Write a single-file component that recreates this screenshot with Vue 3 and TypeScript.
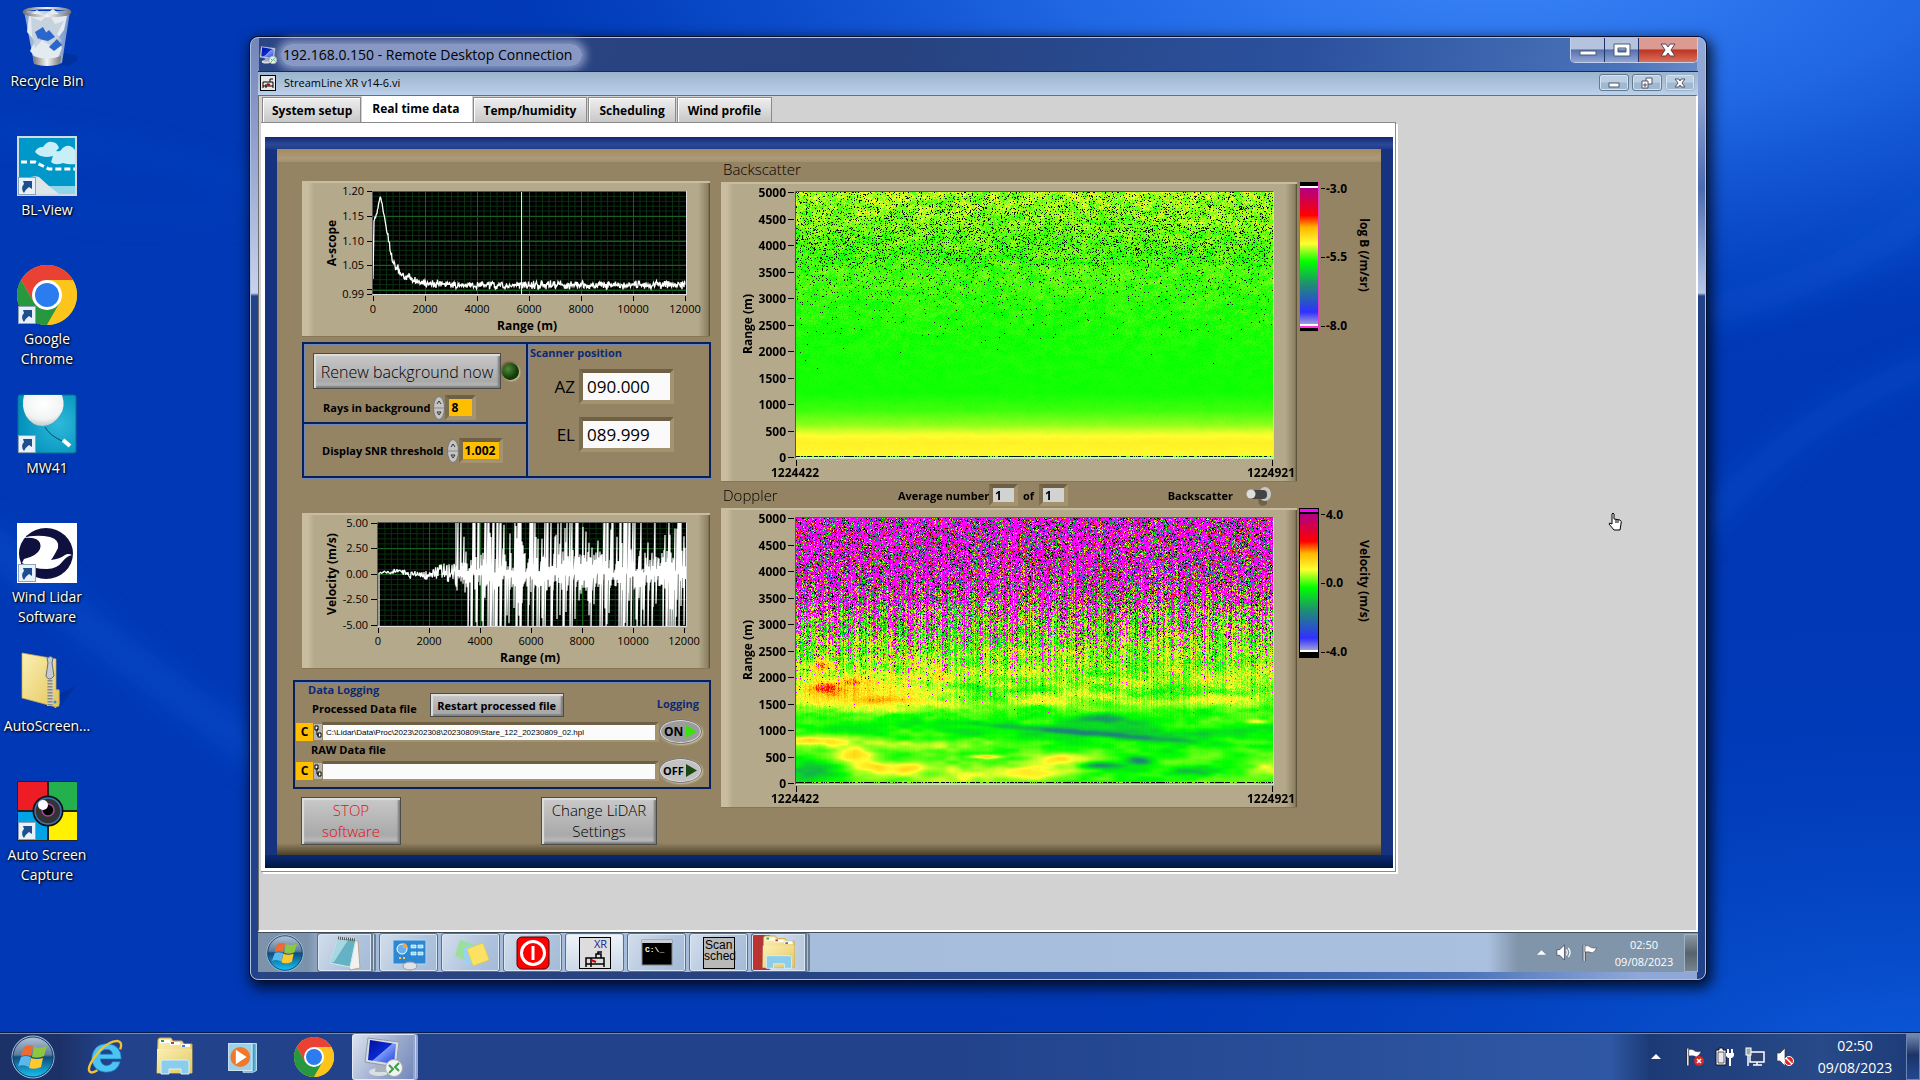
<script setup lang="ts">
import { onMounted, ref } from 'vue'

type Rgb = [number, number, number]
type Blob = [number, number, number, number, number]

const shortcuts = [
  { icon: 'i-bin', label: 'Recycle Bin', link: false },
  { icon: 'i-blview', label: 'BL-View', link: true },
  { icon: 'i-chrome', label: 'Google Chrome', link: true },
  { icon: 'i-mw41', label: 'MW41', link: true },
  { icon: 'i-lidar', label: 'Wind Lidar Software', link: true },
  { icon: 'i-zip', label: 'AutoScreen...', link: false },
  { icon: 'i-asc', label: 'Auto Screen Capture', link: true },
]

const tabs = ['System setup', 'Real time data', 'Temp/humidity', 'Scheduling', 'Wind profile']
const activeTab = ref('Real time data')

const remoteTasks = [
  { icon: 'i-notepad', name: 'Notepad', cls: 'stack' },
  { icon: 'i-control', name: 'Control panel', cls: '' },
  { icon: 'i-notes', name: 'Sticky notes', cls: '' },
  { icon: 'i-power', name: 'Power', cls: '' },
  { icon: 'xr', name: 'StreamLine XR', cls: 'lit' },
  { icon: 'cmd', name: 'Command prompt', cls: '' },
  { icon: 'scan', name: 'Scan scheduler', cls: '' },
  { icon: 'i-explorer', name: 'Explorer', cls: 'stack alert' },
]

const rangeTicks = [5000, 4500, 4000, 3500, 3000, 2500, 2000, 1500, 1000, 500, 0]
const distanceTicks = [0, 2000, 4000, 6000, 8000, 10000, 12000]
const scopeTicks = [
  { y: 10, t: '1.20' },
  { y: 35, t: '1.15' },
  { y: 60, t: '1.10' },
  { y: 84, t: '1.05' },
  { y: 113, t: '0.99' },
]
const velocityTicks = [
  { y: 10, t: '5.00' },
  { y: 35, t: '2.50' },
  { y: 61, t: '0.00' },
  { y: 86, t: '-2.50' },
  { y: 112, t: '-5.00' },
]

const renewRays = ref('8')
const snr = ref('1.002')
const az = ref('090.000')
const el = ref('089.999')
const avgNow = ref('1')
const avgOf = ref('1')
const processedFile = ref('C:\\Lidar\\Data\\Proc\\2023\\202308\\20230809\\Stare_122_20230809_02.hpl')
const rawFile = ref('')

function generator(seed: number): () => number {
  let s = seed >>> 0
  return () => {
    s = (s + 0x6d2b79f5) >>> 0
    let t = s
    t = Math.imul(t ^ (t >>> 15), t | 1)
    t ^= t + Math.imul(t ^ (t >>> 7), t | 61)
    return ((t ^ (t >>> 14)) >>> 0) / 4294967296
  }
}

function interpolate(points: number[][], x: number): number {
  for (let i = 1; i < points.length; i++) {
    if (x <= points[i][0]) {
      const [x0, y0] = points[i - 1]
      const [x1, y1] = points[i]
      return y0 + ((y1 - y0) * (x - x0)) / (x1 - x0)
    }
  }
  return points[points.length - 1][1]
}

function scopeTrace(): string {
  const r = generator(7)
  const shape = [[0, 88], [1, 30], [4, 22], [7, 6], [9, 12], [12, 30], [16, 52], [19, 66], [23, 76], [30, 84], [40, 89], [55, 92], [80, 94], [313, 94]]
  const out: string[] = []
  for (let x = 0; x <= 312; x += 0.5) {
    const n = x < 2 ? 0 : (r() + r() - 1) * (x < 15 ? 2 : 5)
    out.push(`${x + 71},${(interpolate(shape, x) + n + 10).toFixed(1)}`)
  }
  return out.join(' ')
}

function velocityTrace(): string {
  const r = generator(21)
  const out: string[] = ['76,118', '77,118', '77,60']
  let drift = 0
  for (let x = 2; x <= 78; x += 0.5) {
    drift = drift * 0.9 + (r() - 0.5) * 2.5
    const y = 50 + drift + (r() - 0.5) * interpolate([[0, 1], [25, 5], [45, 9], [60, 14], [80, 28]], x)
    out.push(`${76 + x},${(y + 10).toFixed(1)}`)
  }
  const busy = Array.from({ length: 52 }, () => 0.3 + r() * 0.45)
  for (let x = 78; x <= 308; x += 1) {
    const share = x < 92 ? 0.25 : busy[Math.floor(x / 6)]
    const high = r() < share ? (r() < 0.6 ? -4 : r() * 35) : 28 + r() * 22
    const low = r() < share * 0.85 ? (r() < 0.6 ? 112 : 65 + r() * 40) : 50 + r() * 18
    out.push(`${76 + x},${(high + 10).toFixed(1)}`, `${76 + x},${(low + 10).toFixed(1)}`)
  }
  return out.join(' ')
}

const scopePoints = scopeTrace()
const velocityPoints = velocityTrace()

const scale: [number, Rgb][] = [
  [-4, [205, 205, 210]],
  [-3, [48, 48, 255]],
  [-1.2, [28, 140, 110]],
  [-0.1, [0, 255, 0]],
  [0.8, [255, 255, 48]],
  [1.6, [255, 180, 0]],
  [2.2, [255, 0, 0]],
  [4, [150, 0, 150]],
]

function colour(v: number): Rgb {
  if (v > 4) return [255, 0, 255]
  if (v < -4) return [0, 0, 0]
  for (let i = 1; i < scale.length; i++) {
    const [v1, c1] = scale[i]
    if (v <= v1) {
      const [v0, c0] = scale[i - 1]
      const k = (v - v0) / (v1 - v0)
      return [c0[0] + (c1[0] - c0[0]) * k, c0[1] + (c1[1] - c0[1]) * k, c0[2] + (c1[2] - c0[2]) * k]
    }
  }
  return [255, 0, 255]
}

function lattice(seed: number, sx: number, sy: number): (x: number, y: number) => number {
  const r = generator(seed)
  const cells = Array.from({ length: 64 * 64 }, () => r() * 2 - 1)
  return (x, y) => {
    const fx = x / sx
    const fy = y / sy
    const ix = Math.floor(fx)
    const iy = Math.floor(fy)
    const u = (fx - ix) * (fx - ix) * (3 - 2 * (fx - ix))
    const w = (fy - iy) * (fy - iy) * (3 - 2 * (fy - iy))
    const at = (a: number, b: number) => cells[((b & 63) << 6) + (a & 63)]
    const top = at(ix, iy) * (1 - u) + at(ix + 1, iy) * u
    const low = at(ix, iy + 1) * (1 - u) + at(ix + 1, iy + 1) * u
    return top * (1 - w) + low * w
  }
}

function paint(canvas: HTMLCanvasElement | null, pixel: (x: number, y: number) => Rgb) {
  const ctx = canvas?.getContext('2d')
  if (!canvas || !ctx) return
  const { width, height } = canvas
  const image = ctx.createImageData(width, height)
  for (let y = 0; y < height; y++) {
    for (let x = 0; x < width; x++) {
      const c = pixel(x, y)
      const i = (y * width + x) * 4
      image.data[i] = c[0]
      image.data[i + 1] = c[1]
      image.data[i + 2] = c[2]
      image.data[i + 3] = 255
    }
  }
  ctx.putImageData(image, 0, 0)
}

function paintBackscatter(canvas: HTMLCanvasElement | null) {
  const r = generator(3)
  const soft = lattice(5, 9, 5)
  const level = [[0, 0.5], [30, 0.34], [60, 0.16], [85, 0.16], [110, 0.05], [150, -0.02], [200, -0.04], [218, 0.12], [232, 0.4], [243, 0.8], [250, 0.95], [264, 0.85]]
  const grain = [[0, 0.7], [60, 0.5], [110, 0.32], [160, 0.12], [200, 0.05], [240, 0.06], [266, 0.05]]
  const gaps = [[0, 0.1], [20, 0.13], [45, 0.15], [72, 0.12], [76, 0.05], [100, 0.04], [115, 0.012], [150, 0.003], [170, 0.0005], [180, 0]]
  const rows = Array.from({ length: 270 }, () => 0.6 + r() * 0.8)
  paint(canvas, (x, y) => {
    if (y === 264) return r() < 0.7 ? [0, 20, 0] : [120, 255, 60]
    if (r() < interpolate(gaps, y) * rows[y]) return [0, 20, 0]
    const g = interpolate(grain, y)
    const v = interpolate(level, y) + (r() - 0.5) * g + soft(x, y) * g * 0.35
    return colour(Math.max(v, -0.16))
  })
}

function paintDoppler(canvas: HTMLCanvasElement | null) {
  const r = generator(11)
  const wide = lattice(13, 34, 7)
  const fine = lattice(17, 12, 4)
  const column = Array.from({ length: 480 }, () => r())
  const tint = Array.from({ length: 480 }, () => r() - 0.5)
  const base = [[0, 0.3], [120, 0.35], [150, 0.45], [185, 0.4], [196, 0.05], [215, -0.1], [224, 0.2], [240, 0.25], [266, 0.25]]
  const noise = [[0, 0.98], [60, 0.95], [90, 0.74], [115, 0.42], [135, 0.16], [155, 0.03], [175, 0]]
  const blobs: Blob[] = [
    [26, 147, 8, 7, 1.1], [28, 169, 14, 5, 0.8], [50, 174, 80, 18, 0.85], [93, 181, 32, 4, 0.8],
    [55, 163, 8, 6, 0.6], [146, 159, 12, 10, 0.4], [10, 252, 28, 12, -1], [17, 222, 30, 4, 0.8],
    [57, 237, 18, 7, 1], [78, 250, 22, 7, 0.7], [111, 249, 15, 5, 0.8], [160, 257, 40, 7, 0.5],
    [100, 226, 80, 5, 0.4], [189, 238, 16, 2, 1.2], [267, 240, 22, 5, 1.1], [245, 254, 40, 7, 0.5],
    [180, 172, 16, 8, -0.5], [235, 172, 30, 4, -0.5], [303, 202, 32, 5, -0.75], [343, 242, 12, 4, -1.1],
    [396, 253, 26, 4, -0.8], [303, 247, 18, 3, -0.9], [370, 173, 30, 4, -0.5], [340, 210, 120, 20, -0.25],
    [420, 182, 45, 6, 0.4], [250, 183, 40, 4, 0.4], [460, 203, 10, 2, 0.7], [470, 250, 18, 8, 0.3],
    [330, 250, 60, 14, -0.35], [400, 230, 80, 12, -0.25],
  ]
  paint(canvas, (x, y) => {
    if (y === 264) return r() < 0.7 ? [0, 0, 0] : [140, 230, 60]
    const reach = interpolate(noise, y + (0.5 - column[x]) * 60)
    if (r() < reach) {
      const pick = r()
      const m = 0.3 + column[x] * 0.5
      if (pick < m) return [255, 0, 255]
      if (pick < m + 0.13) return [0, 0, 0]
      if (y > 85 && r() < 0.35) return colour(r() * 1.3)
      return colour(r() * 8 - 4)
    }
    let v = interpolate(base, y) + (tint[x] * 0.6 + (r() - 0.5) * 0.8) * interpolate([[0, 2], [110, 1.6], [150, 1.1], [178, 0.7], [190, 0.3], [204, 0.12], [266, 0.05]], y)
    v += wide(x, y - x * 0.03) * 0.28 + fine(x, y) * 0.18
    for (const [bx, by, rx, ry, amp] of blobs) {
      const d = ((x - bx) / rx) ** 2 + ((y - by) / ry) ** 2
      if (d < 6) v += amp * Math.exp(-d)
    }
    const streak = y - (203 + (x - 150) * 0.082)
    v -= 0.95 * Math.exp(-((streak / 3) ** 2)) * Math.exp(-(((x - 290) / 110) ** 2))
    return colour(Math.min(v, 2.6))
  })
}

const backscatterMap = ref<HTMLCanvasElement | null>(null)
const dopplerMap = ref<HTMLCanvasElement | null>(null)

onMounted(() => {
  paintBackscatter(backscatterMap.value)
  paintDoppler(dopplerMap.value)
})
</script>

<template>
  <div class="desktop">
    <svg class="defs" width="0" height="0" aria-hidden="true">
      <defs>
        <linearGradient id="g-glass" x1="0" y1="0" x2="0" y2="1"><stop offset="0" stop-color="#b9c6d8" /><stop offset=".45" stop-color="#5d7c9c" /><stop offset=".5" stop-color="#0e4c7c" /><stop offset="1" stop-color="#18c8f8" /></linearGradient>
        <linearGradient id="g-folder" x1="0" y1="0" x2="1" y2="1"><stop offset="0" stop-color="#fbf0b4" /><stop offset="1" stop-color="#e3c65e" /></linearGradient>
        <linearGradient id="g-bin" x1="0" y1="0" x2="1" y2="0"><stop offset="0" stop-color="#8ea9cf" /><stop offset=".4" stop-color="#dfe7f1" /><stop offset="1" stop-color="#7f9acb" /></linearGradient>
        <linearGradient id="g-metal" x1="0" y1="0" x2="1" y2="0"><stop offset="0" stop-color="#777" /><stop offset=".5" stop-color="#f4f4f4" /><stop offset="1" stop-color="#777" /></linearGradient>
        <linearGradient id="g-screen" x1="0" y1="0" x2="1" y2="1"><stop offset="0" stop-color="#0010a0" /><stop offset=".5" stop-color="#0a2ad0" /><stop offset=".52" stop-color="#7c9af8" /><stop offset="1" stop-color="#1c3ad8" /></linearGradient>
        <radialGradient id="g-balloon" cx=".5" cy=".3" r=".7"><stop offset="0" stop-color="#fff" /><stop offset=".7" stop-color="#f1f3f3" /><stop offset="1" stop-color="#c2c9cb" /></radialGradient>
        <radialGradient id="g-teal" cx=".7" cy=".5" r=".7"><stop offset="0" stop-color="#2fb9da" /><stop offset="1" stop-color="#0090bb" /></radialGradient>
      </defs>
      <symbol id="i-bin" viewBox="0 0 60 60">
        <path d="M48 46l18 4-14 9-18-2z" fill="#002a8a" opacity=".5" />
        <path d="M7 4h46l-8 52q-15 5-28 0z" fill="url(#g-bin)" opacity=".9" />
        <path d="M12 8l8-5 7 5 9-6 6 5 8 2-3 14-6 8 4 10-4 10-11 3-10-2-7-8 5-10-8-9z" fill="#e3eaf0" />
        <path d="M14 10l10 4 8-7 6 10 9-3-7 13 5 7-11 5-9-6-7 8-3-12z" fill="#b9c9d6" opacity=".7" />
        <path d="M22 32l10-9 6 7-7 4z M18 25l8-5 4 7-9 5z M32 40l8-8 5 6-8 6z" fill="#2a66cc" />
        <ellipse cx="30" cy="5" rx="23" ry="4" fill="none" stroke="url(#g-metal)" stroke-width="2.5" />
        <path d="M16 49q14 5 28 0l-1 8q-13 4-26 0z" fill="url(#g-metal)" />
      </symbol>
      <symbol id="i-blview" viewBox="0 0 60 60">
        <rect width="60" height="60" fill="#d4dadd" /><rect x="2" y="2" width="56" height="56" fill="#0098c8" />
        <path d="M18 16q2-5 8-5 4-6 9-5 5 0 7 6l-3 3q4 1 5-1 4-5 9-4 3 1 5 4v14q-6 1-12-1-8 3-12-1l2-6q-12 3-18-4z" fill="#c8eef8" />
        <path d="M4 26h14l14 7h26" fill="none" stroke="#fff" stroke-width="3" stroke-dasharray="6 3" />
        <path d="M2 48q12-10 20-7l10 9h26v8H2z" fill="#dfe4e8" /><path d="M32 50h26v8H42z" fill="#8fd6ea" />
      </symbol>
      <symbol id="i-chrome" viewBox="0 0 60 60">
        <circle cx="30" cy="30" r="30" fill="#fdc41c" />
        <path d="M30 15h26A30 30 0 0 0 4.020 15L17 37.500z" fill="#e94235" />
        <path d="M4.020 15A30 30 0 0 0 30 60L43 37.500 17 37.500z" fill="#27983f" />
        <path d="M43 37.500L30 60a30 30 0 0 0 26-45H30z" fill="#fdc41c" />
        <circle cx="30" cy="30" r="15" fill="#fff" /><circle cx="30" cy="30" r="12" fill="#2b7cee" />
      </symbol>
      <symbol id="i-mw41" viewBox="0 0 60 60">
        <rect x="1" y="1" width="58" height="58" rx="2" fill="url(#g-teal)" stroke="#0b6f90" />
        <path d="M7 1h38q4 12-2 20-6 10-17 11-11 0-17-10-5-9-2-21z" fill="url(#g-balloon)" />
        <path d="M28 33q4 8 17 14" fill="none" stroke="#0b4a60" /><path d="M46 46l7 6" stroke="#fff" stroke-width="4" />
      </symbol>
      <symbol id="i-lidar" viewBox="0 0 60 60">
        <rect width="60" height="60" fill="#fff" /><ellipse cx="29" cy="30.500" rx="27" ry="25.500" fill="#10103e" />
        <path d="M5 15q14-4 28-1 10 3 8 11-4 8-7 12 9-1 14-5 3-2 7 0-5 1-9 6-6 8-16 8-14 0-25-6l2-4q13-3 16-10 2-7-4-10-5-2-14-1z" fill="#fff" />
      </symbol>
      <symbol id="i-zip" viewBox="0 0 60 60">
        <path d="M42 42l16-8-14 20z" fill="#002a8a" opacity=".5" />
        <path d="M38 38h4v14l-4 4z" fill="#e7eef2" stroke="#c9b35d" /><path d="M5 1l34 6v31h3v16l-3 1L5 46z" fill="url(#g-folder)" stroke="#c9a943" stroke-width=".7" />
        <path d="M33 6v48" stroke="#d0cdb8" stroke-width="6" /><path d="M33 28v26" stroke="#8f8a75" stroke-width="5" stroke-dasharray="1.500 1.500" />
        <path d="M30 6q4-3 6 0l-1 5 2 13q-5 6-8 0l2-13z" fill="#c3cbd2" stroke="#666f77" /><circle cx="38" cy="50" r="1.500" fill="#3d8fd0" />
      </symbol>
      <symbol id="i-asc" viewBox="0 0 60 60">
        <rect width="60" height="60" fill="#222" /><rect x="1" y="1" width="29" height="28" fill="#ee1c25" /><rect x="32" y="1" width="28" height="28" fill="#23b14d" />
        <rect x="1" y="31" width="29" height="28" fill="#00a3e8" /><rect x="32" y="31" width="28" height="28" fill="#fff100" />
        <circle cx="31" cy="30" r="15.500" fill="#101010" /><circle cx="31" cy="30" r="13" fill="#333" stroke="#3a78b8" stroke-width="1.500" />
        <circle cx="31" cy="29" r="6" fill="#000" stroke="#a349a4" stroke-width="1.500" /><circle cx="26" cy="24" r="5" fill="#fff" />
      </symbol>
      <symbol id="i-orb" viewBox="0 0 44 44">
        <circle cx="22" cy="22" r="21" fill="url(#g-glass)" stroke="#a9c4dd" stroke-width="1" /><circle cx="22" cy="22" r="20" fill="none" stroke="#123f6c" />
        <path d="M13 12q4-3 9-1l-2 10q-5-2-10 0z" fill="#ee6a32" /><path d="M23 12q6 2 13-1l-3 10q-6 3-12 1z" fill="#8dc63f" />
        <path d="M10 22q4-2 10 0l-2 10q-5-3-11-1z" fill="#5bb8ec" /><path d="M20 23q6 2 12 0l-2 9q-6 3-12 1z" fill="#fdc92f" />
      </symbol>
      <symbol id="i-ie" viewBox="0 0 40 40">
        <path d="M37 22H15q1 7 7 7 4 0 6-4h8q-3 11-15 11Q7 35 6 21 8 6 22 6q15 1 15 16zM15 17h13q-1-5-6-5-6 0-7 5z" fill="#4ec4f2" stroke="#1a7fc8" stroke-width=".7" />
        <path d="M36 12q3-8-3-9-9 0-19 11Q3 27 3 33q1 6 9 1" fill="none" stroke="#f3c32c" stroke-width="2.500" />
      </symbol>
      <symbol id="i-explorer" viewBox="0 0 40 40">
        <path d="M3 3q0-2 2-2h11l2 3h9l2 3h8v29H2z" fill="url(#g-folder)" stroke="#c8a84a" /><path d="M5 3h10v3H5zM15 5h10v3H15zM26 7h9v3h-9z" fill="#fff" />
        <path d="M6 3h3v2H6z" fill="#3f9a3f" /><path d="M16 5h3v2h-3z" fill="#c33" /><path d="M27 8h3v2h-3z" fill="#3c7fd8" />
        <path d="M2 12h35v24H2z" fill="url(#g-folder)" /><path d="M6 37V25q0-2 2-2h24q2 0 2 2v12h-8v-5H14v5z" fill="#8ccdec" stroke="#d6f1fb" />
      </symbol>
      <symbol id="i-wmp" viewBox="0 0 40 40">
        <path d="M24 5h11v30l-4 2H20z" fill="#6cb7d9" stroke="#bfe6f5" /><rect x="4" y="5" width="26" height="30" fill="#a0d0e6" stroke="#d7eff8" />
        <path d="M32 6v30" stroke="#2f86b3" /><circle cx="17" cy="20" r="11" fill="#f0782a" /><path d="M12 12l12 8-12 8z" fill="#fff" />
      </symbol>
      <symbol id="i-rdp" viewBox="0 0 40 40">
        <ellipse cx="16" cy="35" rx="10" ry="4" fill="#dadfe4" /><path d="M13 27h8l2 8H12z" fill="#aab2bb" />
        <path d="M5 1l31 4-3 25-31-5z" fill="#d8dde3" stroke="#8f99a6" /><path d="M7 3l26 4-2 20-26-4z" fill="url(#g-screen)" />
        <circle cx="31" cy="31" r="8.500" fill="#f2f2f2" stroke="#aaa" /><path d="M26 28l4 4-4 4M36 26l-4 4 4 4" fill="none" stroke="#36a14a" stroke-width="2" />
      </symbol>
      <symbol id="i-notepad" viewBox="0 0 36 36"><path d="M13 3l18 3 2 27-10 2z" fill="#f1f1f1" stroke="#b7a98a" /><path d="M11 3l18 1-6 28L3 28z" fill="#64b2c4" stroke="#cfe9ee" /><path d="M11 4l10 1-14 22-4 1z" fill="#a7d7e0" /><path d="M11 3l18 2" stroke="#555" stroke-width="3" stroke-dasharray="1 1" /></symbol>
      <symbol id="i-control" viewBox="0 0 36 36"><rect x="2" y="5" width="33" height="24" rx="1" fill="#2e87d2" stroke="#b8d8f2" /><circle cx="11" cy="14" r="5" fill="#69b0ea" stroke="#fff" /><path d="M12 13V8q4 0 5 5z" fill="#f5a83a" /><path d="M20 10h5v3h-5zM27 10h5v3h-5zM20 17h5v3h-5zM27 17h5v3h-5z" fill="#8fe0fa" stroke="#fff" stroke-width=".6" /><path d="M8 23h2M12 23h2" stroke="#ffc34a" stroke-width="2" /><ellipse cx="19" cy="31" rx="7" ry="4" fill="#dfe3e6" stroke="#99a" /></symbol>
      <symbol id="i-notes" viewBox="0 0 36 36"><path d="M7 5l16 5-6 17-15-6z" fill="#9adf9a" /><path d="M10 12l16-2 1 17-15 2z" fill="#9bd2f4" /><path d="M14 14l16-6 6 17-16 6z" fill="#fbe262" stroke="#e5c63e" stroke-width=".6" /></symbol>
      <symbol id="i-power" viewBox="0 0 36 36"><rect x="2" y="2" width="32" height="32" rx="5" fill="#f00" stroke="#500" /><circle cx="18" cy="18" r="11.500" fill="none" stroke="#fff" stroke-width="3" /><path d="M18 11v14" stroke="#fff" stroke-width="3" /></symbol>
      <symbol id="i-arrow" viewBox="0 0 18 18"><rect x=".5" y=".5" width="17" height="17" fill="#e6f1fa" stroke="#8fa3b5" /><path d="M6 16q-4-5 0-9l-1-3h9v8l-3-2q-3 2-5 6z" fill="#1f4e8c" /></symbol>
      <symbol id="i-flag" viewBox="0 0 18 20"><path d="M3 1v18" stroke="#222" stroke-width="3" /><path d="M3 1v18" stroke="#fff" stroke-width="1.500" /><path d="M4 2q4-1 7 2 3 1 6 0-1 4-5 6-3-2-8-1z" fill="#fff" stroke="#334" stroke-width=".6" /></symbol>
      <symbol id="i-sound" viewBox="0 0 18 18"><path d="M2 6h3l5-5v16l-5-5H2z" fill="#fff" stroke="#334" stroke-width=".7" /><path d="M12 6q2 3 0 6M14 4q4 5 0 10" fill="none" stroke="#fff" stroke-width="1.300" /></symbol>
      <symbol id="i-up" viewBox="0 0 10 6"><path d="M5 0l5 5H0z" fill="#fff" /></symbol>
      <symbol id="i-vi" viewBox="0 0 16 16"><rect x=".5" y=".5" width="15" height="15" fill="#e8e8e8" stroke="#000" /><path d="M3 13V7h10v6M3 11h10M6 13V9M10 7V4h3" fill="none" stroke="#000" /><path d="M7 9l3 1" stroke="#c00" stroke-width="2" /></symbol>
    </svg>

    <svg class="wallpaper" viewBox="0 0 1920 1080" preserveAspectRatio="none" aria-hidden="true">
      <defs>
        <radialGradient id="w-top" gradientUnits="userSpaceOnUse" cx="0" cy="0" r="1" gradientTransform="translate(1500 -40) scale(1100 420)"><stop offset="0" stop-color="#3b86f8" /><stop offset=".4" stop-color="#2067e4" /><stop offset=".75" stop-color="#0a4bc9" stop-opacity=".7" /><stop offset="1" stop-color="#0038b5" stop-opacity="0" /></radialGradient>
        <radialGradient id="w-low" gradientUnits="userSpaceOnUse" cx="0" cy="0" r="1" gradientTransform="translate(1920 1080) scale(1000 480)"><stop offset="0" stop-color="#0c5cdc" /><stop offset="1" stop-color="#0038b5" stop-opacity="0" /></radialGradient>
        <filter id="w-soft"><feGaussianBlur stdDeviation="14" /></filter>
      </defs>
      <rect width="1920" height="1080" fill="#0038b5" />
      <rect width="1920" height="1080" fill="url(#w-top)" />
      <rect width="1920" height="1080" fill="url(#w-low)" />
      <g filter="url(#w-soft)" fill="none" stroke="#0a58d6" opacity=".4">
        <path d="M-20 132Q120 140 260 185" stroke-width="10" /><path d="M60 208Q150 218 260 214" stroke-width="6" />
        <path d="M-20 530Q80 630 270 760" stroke-width="34" /><path d="M1940 200Q1850 280 1690 315" stroke-width="28" /><path d="M1940 360Q1800 410 1690 540" stroke-width="24" />
      </g>
    </svg>

    <nav class="shortcuts" aria-label="Desktop">
      <a v-for="s in shortcuts" :key="s.label" href="#" class="shortcut">
        <span class="pic">
          <svg width="60" height="60"><use :href="'#' + s.icon" /></svg>
          <svg v-if="s.link" class="mark" width="18" height="18"><use href="#i-arrow" /></svg>
        </span>
        <span class="name">{{ s.label }}</span>
      </a>
    </nav>

    <section class="window" aria-label="Remote Desktop Connection">
      <header class="titlebar">
        <svg width="18" height="20"><use href="#i-rdp" /></svg>
        <span class="title">192.168.0.150 - Remote Desktop Connection</span>
        <div class="caption">
          <button aria-label="Minimize"><svg width="18" height="14"><rect x="1" y="8" width="16" height="4" fill="#fff" stroke="#4a5878" /></svg></button>
          <button aria-label="Maximize"><svg width="18" height="14"><path d="M1 1h16v12H1zM5 5v4h8V5z" fill="#fff" fill-rule="evenodd" stroke="#4a5878" /></svg></button>
          <button class="close" aria-label="Close"><svg width="16" height="14"><path d="M1 1h5l2 3 2-3h5l-4 6 4 6h-5l-2-3-2 3H1l4-6z" fill="#fff" stroke="#5a4450" /></svg></button>
        </div>
      </header>

      <div class="remote">
        <header class="vi-title">
          <svg width="16" height="16"><use href="#i-vi" /></svg>
          <span class="vi-name">StreamLine XR v14-6.vi</span>
          <div class="vi-caption">
            <button aria-label="Minimize VI"><svg width="12" height="12"><rect x="1" y="6" width="10" height="4" fill="#fff" stroke="#556" /></svg></button>
            <button aria-label="Restore VI"><svg width="12" height="12"><path d="M5 1h6v6H5z" fill="#fff" stroke="#556" /><path d="M1 4h6v7H1z" fill="#fff" stroke="#556" /><path d="M3 7h2v2H3z" fill="#fff" stroke="#556" /></svg></button>
            <button aria-label="Close VI"><svg width="12" height="12"><path d="M1 2h4l1 2 1-2h4L8 6l3 4H7L6 8l-1 2H1l3-4z" fill="#fff" stroke="#556" /></svg></button>
          </div>
        </header>

        <main class="workspace">
          <div class="tabs" role="tablist">
            <button v-for="t in tabs" :key="t" role="tab" class="tab" :class="{ on: t === activeTab }" :aria-selected="t === activeTab" @click="activeTab = t">{{ t }}</button>
          </div>
          <div class="sheet">
            <div class="bezel">
              <div class="panel">
                <div class="left">
                  <svg class="raised chart" viewBox="0 0 408 156" role="img" aria-label="A-scope">
                    <rect x="71" y="10" width="313" height="103" fill="#000" />
                    <g stroke="#0a3010"><path v-for="n in 47" :key="'a' + n" :d="`M${71.5 + n * 6.5} 10v103`" /><path v-for="n in 20" :key="'b' + n" :d="`M71 ${10.5 + n * 4.9}h313`" /></g>
                    <g stroke="#17601f"><path v-for="n in 5" :key="'c' + n" :d="`M${71.5 + n * 52} 10v103`" /><path d="M71 35.500h313M71 60.500h313M71 84.500h313M71 109.500h313" /></g>
                    <path d="M219.500 10v103" stroke="#ffff40" />
                    <polyline :points="scopePoints" fill="none" stroke="#fff" stroke-width="1.300" />
                    <path d="M70.500 113V10.500H384" fill="none" stroke="#555" /><path d="M71 113.500h313.500V10" fill="none" stroke="#ddd" />
                    <g v-for="t in scopeTicks" :key="t.t"><path :d="`M65 ${t.y + 0.5}h5`" stroke="#000" /><text x="62" :y="t.y + 4" text-anchor="end" class="thin">{{ t.t }}</text></g>
                    <path d="M65 108.500h5" stroke="#000" />
                    <g v-for="(t, i) in distanceTicks" :key="t"><path :d="`M${71.5 + i * 52} 115v5`" stroke="#000" /><text :x="71 + i * 52" y="132" text-anchor="middle" class="thin">{{ t }}</text></g>
                    <text x="225" y="149" text-anchor="middle" class="bold">Range (m)</text>
                    <text transform="translate(34 62) rotate(-90)" text-anchor="middle" class="bold">A-scope</text>
                  </svg>

                  <div class="controls">
                    <div class="box renew">
                      <div class="row"><button class="key big">Renew background now</button><span class="led"></span></div>
                      <div class="row spin-row"><label for="rays">Rays in background</label><svg class="spin" width="12" height="24" viewBox="0 0 12 24"><ellipse cx="6" cy="12" rx="5.500" ry="11.500" fill="#c4c4c4" stroke="#777" /><path d="M1 12h10" stroke="#888" /><path d="M4 8l2-3 2 3M4 16h4l-2 3z" fill="none" stroke="#333" /></svg><input id="rays" v-model="renewRays" class="well amber" size="1" /></div>
                    </div>
                    <div class="box snr">
                      <div class="row spin-row"><label for="snr">Display SNR threshold</label><svg class="spin" width="12" height="24" viewBox="0 0 12 24"><ellipse cx="6" cy="12" rx="5.500" ry="11.500" fill="#c4c4c4" stroke="#777" /><path d="M1 12h10" stroke="#888" /><path d="M4 8l2-3 2 3M4 16h4l-2 3z" fill="none" stroke="#333" /></svg><input id="snr" v-model="snr" class="well amber wide" size="5" /></div>
                    </div>
                    <div class="box scanner">
                      <h2 class="caption-blue">Scanner position</h2>
                      <div class="axis-row"><label for="az">AZ</label><input id="az" v-model="az" class="well large" size="7" /></div>
                      <div class="axis-row"><label for="el">EL</label><input id="el" v-model="el" class="well large" size="7" /></div>
                    </div>
                  </div>

                  <svg class="raised chart second" viewBox="0 0 408 156" role="img" aria-label="Velocity">
                    <defs><clipPath id="c-vel"><rect x="76" y="10" width="308" height="103" /></clipPath></defs>
                    <rect x="76" y="10" width="308" height="103" fill="#000" />
                    <g stroke="#0a3010"><path v-for="n in 47" :key="'a' + n" :d="`M${76.5 + n * 6.4} 10v103`" /><path v-for="n in 20" :key="'b' + n" :d="`M76 ${10.5 + n * 5.1}h308`" /></g>
                    <g stroke="#17601f"><path v-for="n in 5" :key="'c' + n" :d="`M${76.5 + n * 51} 10v103`" /><path d="M76 35.500h308M76 61.500h308M76 86.500h308" /></g>
                    <polyline :points="velocityPoints" fill="none" stroke="#fff" stroke-width="1.200" stroke-linejoin="bevel" clip-path="url(#c-vel)" />
                    <path d="M75.500 113V9.500H384" fill="none" stroke="#555" /><path d="M76 113.500h308.500V10" fill="none" stroke="#ddd" />
                    <g v-for="t in velocityTicks" :key="t.t"><path :d="`M69 ${t.y + 0.5}h6`" stroke="#000" /><text x="66" :y="t.y + 4" text-anchor="end" class="thin">{{ t.t }}</text></g>
                    <g v-for="(t, i) in distanceTicks" :key="t"><path :d="`M${76.5 + i * 51} 115v5`" stroke="#000" /><text :x="76 + i * 51" y="132" text-anchor="middle" class="thin">{{ t }}</text></g>
                    <text x="228" y="149" text-anchor="middle" class="bold">Range (m)</text>
                    <text transform="translate(34 61) rotate(-90)" text-anchor="middle" class="bold">Velocity (m/s)</text>
                  </svg>

                  <div class="box logging">
                    <h2 class="caption-blue">Data Logging</h2>
                    <div class="log-head"><label for="proc">Processed Data file</label><button class="key small">Restart processed file</button><span class="caption-blue">Logging</span></div>
                    <div class="log-row">
                      <button class="drive" aria-label="Drive of processed file">C</button>
                      <svg class="chain" width="8" height="16"><path d="M1 2h3v4H1zM4 5h-1v6h2M4 9h3v4H4z" fill="#fff" stroke="#000" /></svg>
                      <input id="proc" v-model="processedFile" class="path" />
                      <button class="oval" aria-pressed="true">ON<i class="lamp lit"></i></button>
                    </div>
                    <label class="raw-label" for="raw">RAW Data file</label>
                    <div class="log-row">
                      <button class="drive" aria-label="Drive of raw file">C</button>
                      <svg class="chain" width="8" height="16"><path d="M1 2h3v4H1zM4 5h-1v6h2M4 9h3v4H4z" fill="#fff" stroke="#000" /></svg>
                      <input id="raw" v-model="rawFile" class="path" />
                      <button class="oval off" aria-pressed="false">OFF<i class="lamp"></i></button>
                    </div>
                  </div>

                  <div class="actions">
                    <button class="key action stop">STOP<br />software</button>
                    <button class="key action change">Change LiDAR<br />Settings</button>
                  </div>
                </div>

                <div class="maps">
                  <h2 class="map-title">Backscatter</h2>
                  <figure class="raised map">
                    <canvas ref="backscatterMap" width="477" height="266"></canvas>
                    <svg viewBox="0 0 576 300" role="img" aria-label="Backscatter axes">
                      <g v-for="(t, i) in rangeTicks" :key="t"><path :d="`M67 ${Math.round(10 + i * 26.5) + 0.5}h6`" stroke="#000" /><text x="65" :y="Math.round(15 + i * 26.5)" text-anchor="end" class="bold">{{ t }}</text></g>
                      <path d="M75.500 278v6M551.500 278v6" stroke="#000" /><path d="M74.500 276V9.500H552" fill="none" stroke="#555" /><path d="M75 276.500h477.500V10" fill="none" stroke="#cfe8b8" />
                      <text x="74" y="295" text-anchor="middle" class="bold">1224422</text><text x="550" y="295" text-anchor="middle" class="bold">1224921</text>
                      <text transform="translate(31 142) rotate(-90)" text-anchor="middle" class="bold">Range (m)</text>
                    </svg>
                  </figure>
                  <svg class="ramp" width="80" height="150" role="img" aria-label="Backscatter scale">
                    <defs><linearGradient id="ramp" x1="0" y1="0" x2="0" y2="1"><stop offset="0" stop-color="#a000a0" /><stop offset=".22" stop-color="#f00" /><stop offset=".3" stop-color="#ffb400" /><stop offset=".41" stop-color="#ffff30" /><stop offset=".53" stop-color="#0f0" /><stop offset=".68" stop-color="#1e9070" /><stop offset=".87" stop-color="#3030ff" /><stop offset=".98" stop-color="#c8c8c8" /></linearGradient></defs>
                    <rect x=".5" y=".5" width="19" height="149" fill="url(#ramp)" stroke="#e040c0" /><rect x="1" y="0" width="18" height="4" fill="#000" /><rect x="1" y="4" width="18" height="2" fill="#fff" /><rect x="1" y="142" width="18" height="2" fill="#fff" /><rect x="1" y="144" width="18" height="2" fill="#f3d" /><rect x="1" y="146" width="18" height="3" fill="#000" />
                    <path d="M22 6.500h4M22 75.500h4M22 144.500h4" stroke="#000" /><text x="27" y="11" class="bold">-3.0</text><text x="27" y="79" class="bold">-5.5</text><text x="27" y="148" class="bold">-8.0</text>
                    <text transform="translate(61 73) rotate(90)" text-anchor="middle" class="bold">log B (/m/sr)</text>
                  </svg>

                  <div class="map-title doppler">
                    <h2>Doppler</h2>
                    <label class="avg" for="avg">Average number</label><input id="avg" v-model="avgNow" class="well grey" size="1" />
                    <label class="of" for="of">of</label><input id="of" v-model="avgOf" class="well grey" size="1" />
                    <span id="bs" class="bs">Backscatter</span>
                    <button class="toggle" role="switch" aria-checked="true" aria-labelledby="bs"><svg width="26" height="22"><path d="M12 14h9v6q-5 4-8 0z" fill="#6f6248" /><ellipse cx="19" cy="10" rx="6" ry="7" fill="#c8c8c8" /><rect x="3" y="6" width="18" height="9" rx="4" fill="#444" /><circle cx="5" cy="10" r="4.500" fill="#ddd" /></svg></button>
                  </div>
                  <figure class="raised map">
                    <canvas ref="dopplerMap" width="477" height="266"></canvas>
                    <svg viewBox="0 0 576 300" role="img" aria-label="Doppler axes">
                      <g v-for="(t, i) in rangeTicks" :key="t"><path :d="`M67 ${Math.round(10 + i * 26.5) + 0.5}h6`" stroke="#000" /><text x="65" :y="Math.round(15 + i * 26.5)" text-anchor="end" class="bold">{{ t }}</text></g>
                      <path d="M75.500 278v6M551.500 278v6" stroke="#000" /><path d="M74.500 276V9.500H552" fill="none" stroke="#555" /><path d="M75 276.500h477.500V10" fill="none" stroke="#cfe8b8" />
                      <text x="74" y="295" text-anchor="middle" class="bold">1224422</text><text x="550" y="295" text-anchor="middle" class="bold">1224921</text>
                      <text transform="translate(31 142) rotate(-90)" text-anchor="middle" class="bold">Range (m)</text>
                    </svg>
                  </figure>
                  <svg class="ramp" width="80" height="150" role="img" aria-label="Velocity scale">
                    <rect x=".5" y=".5" width="19" height="149" fill="url(#ramp)" stroke="#000" /><rect x="1" y="1" width="18" height="3" fill="#f0f" /><rect x="1" y="4" width="18" height="2" fill="#000" /><rect x="1" y="142" width="18" height="2" fill="#fff" /><rect x="1" y="144" width="18" height="6" fill="#000" />
                    <path d="M22 6.500h4M22 75.500h4M22 144.500h4" stroke="#000" /><text x="27" y="11" class="bold">4.0</text><text x="27" y="79" class="bold">0.0</text><text x="27" y="148" class="bold">-4.0</text>
                    <text transform="translate(61 73) rotate(90)" text-anchor="middle" class="bold">Velocity (m/s)</text>
                  </svg>
                </div>
              </div>
            </div>
          </div>
        </main>

        <footer class="remote-bar">
          <button class="orb" aria-label="Remote start"><svg width="38" height="38"><use href="#i-orb" /></svg></button>
          <button v-for="t in remoteTasks" :key="t.name" class="task" :class="t.cls" :aria-label="t.name">
            <svg v-if="t.icon === 'xr'" width="36" height="36"><rect x="2.500" y="2.500" width="31" height="31" fill="#ddd" stroke="#000" /><text x="17" y="13" font-size="11" fill="#1a1a9a">XR</text><path d="M9 32v-9h18v9M9 29h18M14 23v9M19 23v-4h5v4M21 19v-2h4" fill="none" stroke="#000" stroke-width="1.500" /><path d="M14 25l5 2" stroke="#c00" stroke-width="2" /></svg>
            <svg v-else-if="t.icon === 'cmd'" width="36" height="36"><rect x="3" y="5" width="30" height="25" fill="#000" stroke="#888" /><rect x="3" y="5" width="30" height="3" fill="#c9ced3" /><text x="6" y="17" font-size="8" class="mono">C:\_</text></svg>
            <svg v-else-if="t.icon === 'scan'" width="36" height="36"><rect x="2.500" y="2.500" width="31" height="31" fill="#b9b9b9" stroke="#000" /><text x="4" y="14" font-size="12" class="plain">Scan</text><text x="3" y="25" font-size="12" class="plain">sched</text></svg>
            <svg v-else width="36" height="36"><use :href="'#' + t.icon" /></svg>
          </button>
          <div class="tray">
            <svg width="9" height="6"><use href="#i-up" /></svg>
            <svg width="17" height="17"><use href="#i-sound" /></svg>
            <svg width="17" height="18"><use href="#i-flag" /></svg>
            <time class="clock">02:50<br />09/08/2023</time>
          </div>
          <button class="peek" aria-label="Show remote desktop"></button>
        </footer>
      </div>
    </section>

    <svg class="cursor" width="14" height="19" viewBox="0 0 14 19"><path d="M4 10V2q1-2 2 0v5l6 1q2 1 1 4l-1 6H6l-5-6q0-2 3 0z" fill="#fff" stroke="#000" /><path d="M8 8v3M10 8v3" stroke="#000" /></svg>

    <footer class="host-bar">
      <button class="pin start" aria-label="Start"><svg width="44" height="44"><use href="#i-orb" /></svg></button>
      <button class="pin" aria-label="Internet Explorer"><svg width="38" height="40"><use href="#i-ie" /></svg></button>
      <button class="pin" aria-label="Windows Explorer"><svg width="40" height="40"><use href="#i-explorer" /></svg></button>
      <button class="pin player" aria-label="Media Player"><svg width="36" height="40"><use href="#i-wmp" /></svg></button>
      <button class="pin browser" aria-label="Google Chrome"><svg width="40" height="40"><use href="#i-chrome" /></svg></button>
      <button class="running" aria-label="Remote Desktop Connection"><svg width="40" height="40"><use href="#i-rdp" /></svg></button>
      <div class="host-tray">
        <svg class="up" width="10" height="6"><use href="#i-up" /></svg>
        <svg width="20" height="20" viewBox="0 0 20 20"><use href="#i-flag" width="17" height="20" /><circle cx="14" cy="14" r="5" fill="#d8282c" /><path d="M12 12l4 4M16 12l-4 4" stroke="#fff" stroke-width="1.500" /></svg>
        <svg width="20" height="20" viewBox="0 0 20 20"><path d="M4 1h4v2h3v15H1V3h3z" fill="#fff" stroke="#112" /><path d="M3 5h6v11H3z" fill="#e6eaf0" stroke="#334" stroke-width=".8" /><path d="M13 2v4M17 2v4M15 10v9" stroke="#fff" stroke-width="2" /><path d="M11 6h8v3l-2 2h-4l-2-2z" fill="#fff" /></svg>
        <svg width="20" height="20" viewBox="0 0 20 20"><rect x="5" y="5" width="14" height="10" fill="#2c4270" stroke="#fff" stroke-width="1.500" /><path d="M8 18h9M12 15v3M3 8v11" stroke="#fff" stroke-width="1.500" /><rect x="1" y="1" width="5" height="7" fill="#9aa" stroke="#fff" /></svg>
        <svg width="20" height="20" viewBox="0 0 20 20"><path d="M2 6h3l5-5v18l-5-5H2z" fill="#fff" stroke="#334" stroke-width=".7" /><circle cx="14" cy="14" r="4.500" fill="#d8282c" stroke="#fff" /><path d="M11 11l6 6" stroke="#fff" stroke-width="1.500" /></svg>
        <time class="clock host">02:50<br />09/08/2023</time>
      </div>
      <button class="peek host" aria-label="Show desktop"></button>
    </footer>
  </div>
</template>

<style>
html,
body {
  height: 100%;
  overflow: hidden;
}
</style>

<style scoped>
* {
  box-sizing: border-box;
}
button,
input {
  font: inherit;
  color: inherit;
  margin: 0;
  padding: 0;
  border: 0;
  background: none;
}
h2,
figure {
  margin: 0;
}
svg,
canvas {
  display: block;
}
.desktop {
  position: relative;
  display: flex;
  flex-direction: column;
  justify-content: space-between;
  height: 100vh;
  overflow: hidden;
  background: #0038b5;
  font-family: 'Open Sans', 'Noto Sans', sans-serif;
  font-size: 14px;
}
.defs,
.wallpaper {
  position: absolute;
}
.wallpaper {
  inset: 0;
  width: 100%;
  height: 100%;
}
.shortcuts {
  position: relative;
  width: 94px;
}
.shortcut {
  display: flex;
  flex-direction: column;
  align-items: center;
  gap: 4px;
  height: 129px;
  padding-top: 7px;
  color: #fff;
  line-height: 20px;
  text-align: center;
  text-decoration: none;
  text-shadow: 1px 1px 2px #000, 0 0 3px #000;
}
.pic {
  position: relative;
}
.mark {
  position: absolute;
  left: 1px;
  bottom: 1px;
}
.name {
  max-width: 92px;
}

.window {
  position: absolute;
  inset: 37px 214px 100px 250px;
  display: flex;
  flex-direction: column;
  padding: 0 7px 7px;
  border: 1px solid #aebfe2;
  border-radius: 8px;
  background:
    linear-gradient(#7487ba 0, #8c9ccb 90px, #c8d2ea 255px, #22438a 258px) left / 8px 100% no-repeat,
    linear-gradient(#93a9d8 0, #8fa4d2 60px, #4a6bb0 150px, #bac7e6 255px, #22438a 258px) right / 8px 100% no-repeat,
    linear-gradient(100deg, #2c4584 0, #27427f 40%, #2b519e 65%, #4a73ba 85%, #90a8d8 96%);
  box-shadow: 0 0 0 1px #06102c, 3px 5px 14px 3px rgba(0, 0, 0, 0.75);
}
.titlebar {
  display: flex;
  align-items: center;
  gap: 4px;
  height: 33px;
  flex: none;
}
.titlebar > svg {
  margin-left: 1px;
}
.title {
  padding: 3px 10px 3px 2px;
  border-radius: 14px;
  background: rgba(160, 174, 212, 0.8);
  box-shadow: 0 0 8px 4px rgba(160, 174, 212, 0.8);
  font-size: 14px;
  line-height: 16px;
}
.caption {
  display: flex;
  align-self: flex-start;
  margin-left: auto;
  border: 1px solid #c4d0ea;
  border-top: 0;
  border-radius: 0 0 5px 5px;
  overflow: hidden;
}
.caption button {
  display: grid;
  place-items: center;
  width: 34px;
  height: 24px;
  border-right: 1px solid #22356a;
  background: linear-gradient(#b6c3de 45%, #5670ac 50%, #90a6d4);
}
.caption .close {
  width: 58px;
  border: 0;
  background: linear-gradient(#dc9a92 45%, #bf3422 50%, #d8705c);
}

.remote {
  display: flex;
  flex: 1;
  flex-direction: column;
  min-height: 0;
  border-top: 1px solid #1c2c50;
  background: #d2d2d2;
}
.vi-title {
  display: flex;
  align-items: center;
  flex: none;
  height: 23px;
  padding: 0 3px 2px 2px;
  background: linear-gradient(#9bb3cb, #bcd1ec);
  font-size: 11px;
}
.vi-name {
  margin-left: 8px;
}
.vi-caption {
  display: flex;
  gap: 3px;
  margin-left: auto;
}
.vi-caption button {
  display: grid;
  place-items: center;
  width: 30px;
  height: 17px;
  border: 1px solid #65788c;
  border-radius: 3px;
  box-shadow: inset 0 0 0 1px #d4e3f2;
  background: linear-gradient(#bccfe2 48%, #9fb9d2 52%);
}
.vi-caption button:last-child {
  border-color: #9db4cb;
}
.workspace {
  flex: 1;
  min-height: 0;
  padding-left: 2px;
  border-top: 1px solid #6e6e6e;
  border-right: 2px solid #fff;
  border-bottom: 2px solid #fff;
  border-left: 1px solid #6e6e6e;
  overflow: hidden;
}
.tabs {
  display: flex;
  align-items: flex-end;
  gap: 1px;
  height: 26px;
  padding-left: 1px;
}
.tab {
  height: 25px;
  padding: 0 10px;
  border: 1px solid #8a8a8a;
  border-bottom: 0;
  box-shadow: inset 1px 1px #fff;
  background: linear-gradient(#efefef, #c8c8c8);
  font-size: 12px;
  font-weight: 700;
}
.tab:first-child {
  padding: 0 8px 0 9px;
}
.tab.on {
  height: 26px;
  padding: 0 12px 2px 10px;
  border: 0;
  box-shadow: none;
  background: #fff;
}
.sheet {
  width: 1135px;
  padding: 14px 2px 3px 4px;
  border-top: 1px solid #8a8a8a;
  border-right: 1px solid #8a8a8a;
  border-bottom: 1px solid #8a8a8a;
  box-shadow: 2px 2px #fff;
  background: #fff;
}
.bezel {
  padding: 12px 12px 13px;
  background:
    linear-gradient(#102a72, #2b4797 60%, #203b88) top / 100% 12px no-repeat,
    linear-gradient(#0a2a74, #00153f) bottom / 100% 13px no-repeat,
    #17337f;
}
.panel {
  display: flex;
  gap: 10px;
  height: 706px;
  padding-left: 16px;
  background:
    linear-gradient(#a58a60, #ad9a78 70%, #a3906c) top / 100% 13px no-repeat,
    linear-gradient(rgba(0, 0, 0, 0), #4a4028) bottom / 100% 12px no-repeat,
    #948464;
}
.left {
  display: flex;
  flex-direction: column;
  align-items: flex-end;
  flex: none;
  width: 418px;
  padding-top: 32px;
}
.raised {
  border: 0;
  background:
    linear-gradient(#c9bda0, #c9bda0) top / 100% 2px no-repeat,
    linear-gradient(#857656, #857656) bottom / 100% 1px no-repeat,
    linear-gradient(90deg, #c9bda0 6px, #b5a98c 12px) left / 20px 100% no-repeat,
    linear-gradient(90deg, #b5a98c, #8e8163 10px, #4d452e) right / 12px 100% no-repeat,
    #b5a98c;
}
.chart {
  width: 408px;
  height: 156px;
  margin-right: 1px;
}
.chart.second {
  margin-top: 35px;
}
.thin {
  font-size: 11px;
}
.bold {
  font-size: 12px;
  font-weight: 700;
}
.mono {
  fill: #fff;
  font-family: 'Liberation Mono', monospace;
  font-weight: 700;
}
.plain {
  font-family: 'Liberation Sans', sans-serif;
}
.box {
  border: 2px solid #07205c;
  box-shadow: inset 1px 1px #6f86b4, 1px 1px #6f86b4;
}
.controls {
  display: grid;
  grid-template: 82px 54px / 226px 183px;
  width: 408px;
  height: 136px;
  margin: 5px 1px 0 0;
  font-size: 12px;
  font-weight: 700;
}
.renew {
  padding: 9px 0 0 9px;
}
.snr {
  grid-row: 2;
  margin-top: -2px;
  padding: 14px 0 0 16px;
}
.scanner {
  grid-area: 1 / 2 / 3 / 3;
  margin-left: -2px;
}
.row {
  display: flex;
  align-items: center;
}
.renew .spin-row {
  margin-top: 6px;
  padding-left: 10px;
}
.spin-row label {
  font-size: 11px;
}
.snr .spin-row {
  padding-left: 2px;
}
.spin {
  margin: 0 0 0 3px;
}
.key {
  border: 1px solid #4c4c4c;
  box-shadow: inset 2px 2px 1px #dedede, inset -2px -2px 2px #7c7c7c;
  background: linear-gradient(#c9c9c9, #a9a9a9 80%, #c2c2c2);
  color: #000;
}
.key.big {
  width: 188px;
  height: 36px;
  padding-top: 2px;
  font-size: 16px;
  font-weight: 300;
}
.led {
  width: 17px;
  height: 17px;
  margin-left: 1px;
  border-radius: 50%;
  box-shadow: 1px 1px 2px #d8ccaa, -1px -1px 2px #5a4d30;
  background: radial-gradient(circle at 35% 35%, #4f8a3a, #123a08 60%);
}
.well {
  border: 4px solid;
  border-color: #6e6044 #a3936f #a3936f #7b6c4e;
  background: #fafafa;
}
.amber {
  width: 31px;
  height: 25px;
  padding-left: 2px;
  background: #ffbe00;
}
.amber.wide {
  width: 44px;
}
.caption-blue {
  color: #0a2a78;
  font-size: 11px;
  font-weight: 700;
  line-height: 14px;
}
.scanner .caption-blue {
  padding: 2px 0 0 2px;
}
.axis-row {
  display: flex;
  align-items: center;
  justify-content: flex-end;
  gap: 4px;
  height: 35px;
  margin: 9px 35px 13px 0;
  font-size: 17px;
  font-weight: 400;
}
.well.large {
  width: 95px;
  height: 35px;
  padding-left: 4px;
}
.logging {
  width: 418px;
  height: 109px;
  margin-top: 11px;
  padding: 1px 0 0 1px;
  font-size: 12px;
  font-weight: 700;
}
.logging > .caption-blue {
  padding-left: 12px;
}
.log-head {
  display: flex;
  align-items: center;
  height: 22px;
  padding: 0 10px 0 16px;
}
.log-head label,
.raw-label {
  font-size: 11px;
}
.key.small {
  align-self: flex-start;
  width: 134px;
  height: 24px;
  margin: -4px auto 0 13px;
  font-size: 11px;
}
.log-head .caption-blue {
  align-self: flex-start;
}
.log-row {
  display: flex;
  align-items: center;
  height: 25px;
}
.drive {
  width: 17px;
  height: 18px;
  background: #ffbe00;
}
.chain {
  margin-left: 1px;
  background: #b4b4b4;
}
.path {
  width: 337px;
  height: 20px;
  padding-left: 3px;
  border: 2px solid;
  border-color: #6e6044 #a3936f #a3936f #948464;
  border-width: 3px 4px 2px 1px;
  background: #fbfbfb;
  font-family: 'Liberation Sans', sans-serif;
  font-size: 8px;
  font-weight: 400;
}
.oval {
  display: flex;
  align-items: center;
  justify-content: space-between;
  width: 43px;
  height: 25px;
  padding: 0 4px;
  border: 1px solid #777;
  border-radius: 50%;
  box-shadow: inset 0 0 0 1px #ddd, 1px 1px 2px #d3c6a4;
  background: #9c9c9c;
}
.oval.off {
  padding-left: 3px;
  background: #c2c2c2;
  font-size: 11px;
}
.lamp {
  width: 11px;
  height: 13px;
  background: #1d4a12;
  clip-path: polygon(0 0, 100% 50%, 0 100%);
}
.lamp.lit {
  background: #3be010;
}
.raw-label {
  display: block;
  height: 14px;
  padding-left: 15px;
  line-height: 12px;
}
.actions {
  display: flex;
  gap: 140px;
  margin: 8px 54px 0 0;
}
.action {
  width: 116px;
  height: 48px;
  font-size: 15px;
  font-weight: 300;
  line-height: 21px;
}
.stop {
  width: 100px;
  color: #e01010;
}
.maps {
  display: grid;
  flex: 1;
  grid-template: 33px 300px 26px 300px / 576px 1fr;
  column-gap: 2px;
  align-content: start;
}
.map {
  display: grid;
  grid-template: 10px 266px 1fr / 75px 477px 1fr;
}
.map canvas {
  grid-area: 2 / 2;
}
.map svg {
  grid-area: 1 / 1 / -1 / -1;
  width: 576px;
  height: 300px;
}
.ramp {
  overflow: visible;
}
.map-title {
  grid-column: 1 / -1;
  padding: 10px 0 0 2px;
  font-size: 15px;
  font-weight: 300;
}
.doppler {
  display: flex;
  align-items: center;
  width: 576px;
  padding-top: 0;
}
.doppler h2 {
  width: 175px;
  font: inherit;
}
.doppler label,
.bs {
  font-size: 11px;
  font-weight: 700;
}
.doppler .avg {
  width: 91px;
  white-space: nowrap;
}
.grey {
  width: 29px;
  height: 22px;
  padding-left: 2px;
  background: #d2d2d2;
  font-size: 12px;
  font-weight: 700;
}
.doppler .of {
  padding: 0 5px;
}
.bs {
  margin: 0 13px 0 auto;
}
.toggle {
  margin-right: 25px;
}

.remote-bar {
  display: flex;
  align-items: center;
  flex: none;
  gap: 3px;
  height: 40px;
  border-top: 1px solid #3e4c5c;
  background: linear-gradient(90deg, #7d93ac 50px, #a3bad8 70px, #a9c0de calc(100% - 210px), #8094aa calc(100% - 180px));
}
.orb {
  display: grid;
  place-items: center;
  width: 54px;
  margin-right: 2px;
}
.task {
  display: grid;
  place-items: center;
  width: 59px;
  height: 39px;
  border: 1px solid #5f7084;
  border-radius: 3px;
  box-shadow: inset 0 0 0 1px #dbe6f3;
  background: linear-gradient(120deg, #d3deeb, #b0c4de 60%, #a3bad6);
}
.task.lit {
  background: linear-gradient(#f0f4f9, #cbd8e8);
}
.task.stack {
  border-right: 5px double #6a7e96;
}
.task.alert {
  background: linear-gradient(90deg, #c43030 0, #a83a3e 17px, #d6dfea 19px, #b8cae0) padding-box no-repeat;
}
.tray {
  display: flex;
  align-items: center;
  gap: 9px;
  margin-left: auto;
}
.clock {
  width: 74px;
  color: #fff;
  font-size: 11px;
  line-height: 17px;
  text-align: center;
}
.peek {
  width: 14px;
  height: 38px;
  border: 1px solid #9fb0c0;
  background: linear-gradient(#8a98a6, #56636f 50%, #76848f);
}
.cursor {
  position: absolute;
  left: 1608px;
  top: 512px;
}
.host-bar {
  position: relative;
  display: flex;
  align-items: center;
  flex: none;
  height: 48px;
  border-top: 1px solid #081c4c;
  box-shadow: inset 0 1px #6f8ac0;
  background: linear-gradient(90deg, #1c3168 0, #1c3168 60px, #22438c 110px, #22438c 50%, #2f58a4 calc(100% - 310px), #1c3a76 calc(100% - 270px), #284a88 calc(100% - 100px), #1c3a76);
}
.pin {
  display: grid;
  place-items: center;
  width: 70px;
  height: 46px;
}
.pin.start {
  padding-right: 4px;
}
.pin.player {
  width: 66px;
}
.pin.browser {
  width: 76px;
}
.running {
  display: grid;
  place-items: center;
  width: 66px;
  height: 46px;
  border: 1px solid #e4eaf6;
  border-right: 5px double #93a5cc;
  border-radius: 3px;
  background: linear-gradient(120deg, #dbe2f0, #98a8cc 60%, #7488ba);
}
.host-tray {
  display: flex;
  align-items: center;
  gap: 10px;
  margin-left: auto;
}
.up {
  margin-right: 14px;
}
.clock.host {
  width: 104px;
  margin: 0 -8px 0 -2px;
  font-size: 14px;
  line-height: 22px;
}
.peek.host {
  height: 46px;
  margin-left: 7px;
  border-color: #6c86b4;
  background: linear-gradient(#7288ae, #1c3468 45%, #234890);
}
</style>
